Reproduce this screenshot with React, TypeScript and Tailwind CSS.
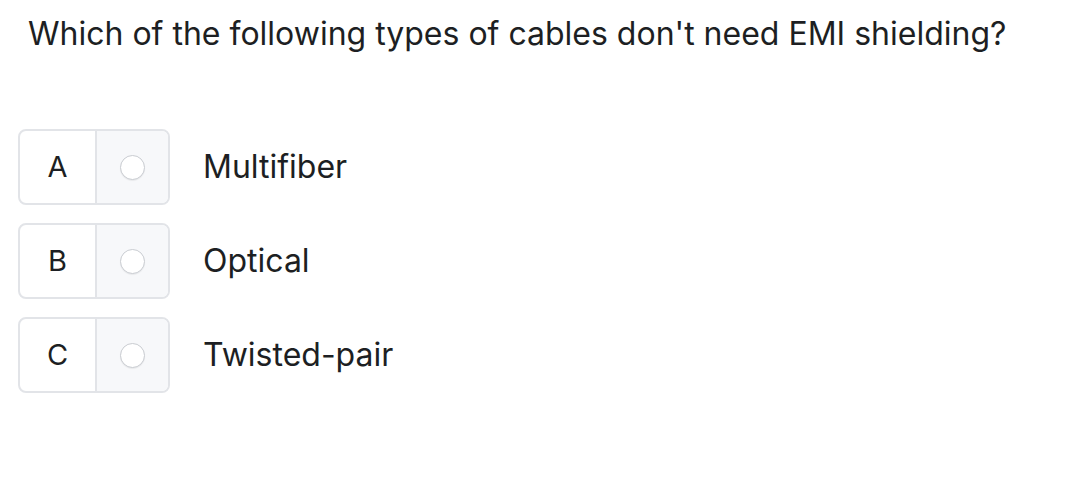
const options = [
  { key: "A", label: "Multifiber" },
  { key: "B", label: "Optical" },
  { key: "C", label: "Twisted-pair" },
]

export default function App() {
  return (
    <div className="w-[1078px] h-[484px] bg-white text-[#1d1f23] font-['Inter','Liberation_Sans',sans-serif]">
      <h1 className="pl-[28px] pt-[14px] text-[32px] leading-[40px] font-normal">
        Which of the following types of cables don't need EMI shielding?
      </h1>
      <ul className="mt-[75px] pl-[18px] flex flex-col gap-[18px]">
        {options.map((o) => (
          <li key={o.key} className="flex items-center">
            <div className="flex h-[76px] w-[152px] rounded-[8px] border-2 border-[#e2e4e8] overflow-hidden">
              <div className="w-[75px] flex items-center justify-center text-[29px]">
                {o.key}
              </div>
              <div className="flex-1 flex items-center justify-center bg-[#f7f8fa] border-l-2 border-[#e2e4e8]">
                <span className="w-[25px] h-[25px] rounded-full bg-white border border-[#c9ccd1] shadow-[0_1px_1px_rgba(0,0,0,0.06)]" />
              </div>
            </div>
            <span className="ml-[33px] text-[32px]">{o.label}</span>
          </li>
        ))}
      </ul>
    </div>
  )
}
